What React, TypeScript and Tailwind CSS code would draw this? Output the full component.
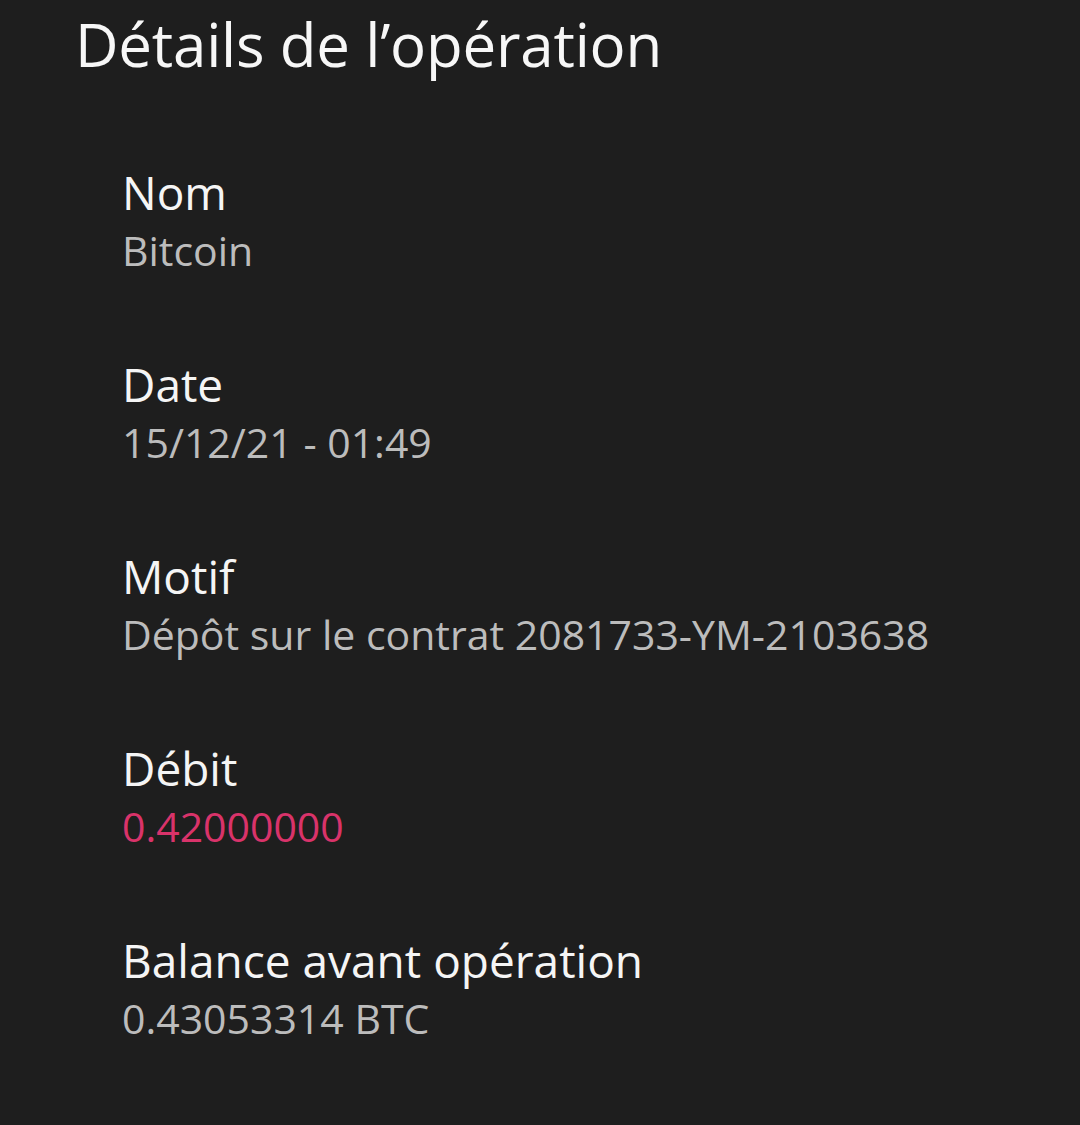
const rows: { label: string; value: string; accent?: boolean }[] = [
  { label: "Nom", value: "Bitcoin" },
  { label: "Date", value: "15/12/21 - 01:49" },
  { label: "Motif", value: "Dépôt sur le contrat 2081733-YM-2103638" },
  { label: "Débit", value: "0.42000000", accent: true },
  { label: "Balance avant opération", value: "0.43053314 BTC" },
];

export default function App() {
  return (
    <div
      className="min-h-[1125px] w-[1080px] bg-[#1e1e1e] text-white"
      style={{ fontFamily: "'Open Sans', 'Noto Sans', sans-serif" }}
    >
      <h1 className="pl-[75px] pt-[4px] text-[60px] leading-[80px] tracking-[-0.2px] text-[#f7f7f7]">
        Détails de l’opération
      </h1>
      <div className="pl-[122px] pt-[78px] flex flex-col gap-[76px]">
        {rows.map((r) => (
          <div key={r.label} className="flex flex-col">
            <span className="text-[46px] leading-[60px] text-[#f5f5f5]">{r.label}</span>
            <span
              className={
                "text-[41px] leading-[56px] " +
                (r.accent ? "text-[#d9336a]" : "text-[#bcbcbc]")
              }
            >
              {r.value}
            </span>
          </div>
        ))}
      </div>
    </div>
  );
}
